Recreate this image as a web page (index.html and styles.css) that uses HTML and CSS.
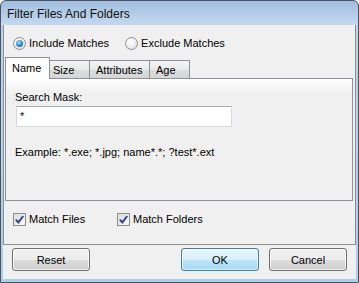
FILE: index.html
```html
<!DOCTYPE html>
<html lang="en">
<head>
    <meta charset="UTF-8">
    <title>Filter Files And Folders</title>
    <link rel="stylesheet" href="styles.css">
</head>
<body>
    <div class="window">
        <div class="titlebar">Filter Files And Folders</div>
        <div class="client">
            <div class="content">
                <div class="radios">
                    <label class="option"><span class="radio checked"></span>Include Matches</label>
                    <label class="option"><span class="radio"></span>Exclude Matches</label>
                </div>
                <div class="tabs">
                    <div class="tab active tab-name">Name</div>
                    <div class="tab tab-size">Size</div>
                    <div class="tab tab-attr">Attributes</div>
                    <div class="tab tab-age">Age</div>
                </div>
                <div class="tab-page">
                    <div class="field-label">Search Mask:</div>
                    <div class="textbox">*</div>
                    <div class="example">Example: *.exe; *.jpg; name*.*; ?test*.ext</div>
                </div>
                <div class="checks">
                    <label class="option match-files">
                        <span class="checkbox"><svg width="9" height="9" viewBox="0 0 9 9"><path d="M0.8 4.6 L3.4 7.4 L8.2 1" fill="none" stroke="#34478a" stroke-width="2"/></svg></span>Match Files
                    </label>
                    <label class="option">
                        <span class="checkbox"><svg width="9" height="9" viewBox="0 0 9 9"><path d="M0.8 4.6 L3.4 7.4 L8.2 1" fill="none" stroke="#34478a" stroke-width="2"/></svg></span>Match Folders
                    </label>
                </div>
            </div>
            <div class="buttons">
                <button class="btn">Reset</button>
                <div class="btn-group">
                    <button class="btn default">OK</button>
                    <button class="btn">Cancel</button>
                </div>
            </div>
        </div>
    </div>
</body>
</html>
```

FILE: styles.css
```css
body {
    margin: 0;
    padding: 0;
    font-family: 'Liberation Sans', Arial, sans-serif;
    font-size: 11px;
    color: #000;
    background: #fff;
}
.window {
    width: 359px;
    height: 283px;
    box-sizing: border-box;
    border: 1px solid #4a5563;
    border-radius: 6px 6px 0 0;
    background: linear-gradient(#a2bedf, #c4d9f0 24px, #bcd4ee 24px, #a9d0ec 100%);
    display: flex;
    flex-direction: column;
    overflow: hidden;
}
.titlebar {
    height: 24px;
    line-height: 26px;
    padding-left: 6px;
    font-size: 12px;
    color: #111;
}
.client {
    flex: 1;
    margin: 0 2px 3px;
    background: #f0f0f0;
    display: flex;
    flex-direction: column;
}
.content {
    height: 220px;
    box-sizing: border-box;
    border: 1px solid #8f8f8f;
    border-top: none;
    padding: 0 1px;
}
.option {
    display: flex;
    align-items: center;
    height: 13px;
    line-height: 13px;
}
.radios {
    display: flex;
    padding: 12px 0 0 8px;
    gap: 16px;
}
.radio {
    width: 11px;
    height: 11px;
    border: 1px solid #8c8e91;
    border-radius: 50%;
    background: radial-gradient(circle at 40% 35%, #ffffff, #e6e6e6 70%, #d2d2d2);
    margin-right: 3px;
    position: relative;
}
.radio.checked::after {
    content: "";
    position: absolute;
    left: 2px;
    top: 2px;
    width: 7px;
    height: 7px;
    border-radius: 50%;
    background: radial-gradient(circle at 40% 35%, #a9e0ff, #2d84cf 55%, #174a86);
}
.tabs {
    display: flex;
    align-items: flex-end;
    margin-top: 7px;
}
.tab {
    box-sizing: border-box;
    height: 18px;
    border: 1px solid #8d9199;
    border-bottom: none;
    margin-right: -1px;
    background: linear-gradient(#f4f4f4, #e8e8e8 50%, #dcdcdc 51%, #d6d6d6);
    padding-left: 3px;
    line-height: 18px;
}
.tab.active {
    height: 22px;
    margin-bottom: -1px;
    background: #fff;
    position: relative;
    z-index: 1;
    padding-left: 6px;
    line-height: 20px;
}
.tab-name { width: 45px; }
.tab-size { width: 41px; }
.tab-attr { width: 61px; padding-left: 6px; }
.tab-age { width: 41px; padding-left: 6px; }
.tab-page {
    height: 123px;
    box-sizing: border-box;
    border: 1px solid #8d9199;
    margin-right: 1px;
    padding: 12px 9px 0;
    background: linear-gradient(#ffffff, #f0f0f0 14px);
}
.field-label {
    line-height: 13px;
}
.textbox {
    width: 216px;
    height: 21px;
    box-sizing: border-box;
    margin: 2px 0 0 1px;
    border: 1px solid #d6dbe1;
    border-top-color: #abadb3;
    background: #fff;
    padding-left: 3px;
    line-height: 19px;
}
.example {
    margin-top: 19px;
    line-height: 13px;
}
.checks {
    display: flex;
    padding: 12px 0 0 8px;
}
.match-files {
    width: 104px;
}
.checkbox {
    width: 11px;
    height: 11px;
    border: 1px solid #8c8e91;
    background: linear-gradient(135deg, #dcdcdc, #fafafa);
    margin-right: 3px;
    display: flex;
    align-items: center;
    justify-content: center;
}
.buttons {
    flex: 1;
    display: flex;
    justify-content: space-between;
    padding: 3px 9px 0;
}
.btn-group {
    display: flex;
    gap: 10px;
}
.btn {
    width: 78px;
    height: 23px;
    box-sizing: border-box;
    border: 1px solid #707070;
    border-radius: 3px;
    background: linear-gradient(#f2f2f2, #ebebeb 50%, #dddddd 51%, #cfcfcf);
    font-family: 'Liberation Sans', Arial, sans-serif;
    font-size: 11px;
    color: #000;
    padding: 0;
    box-shadow: inset 0 0 0 1px rgba(255, 255, 255, 0.7);
}
.btn.default {
    border-color: #3c7fb1;
    background: linear-gradient(#eaf6fd, #d9f0fc 50%, #bee6fd 51%, #a7d9f5);
    box-shadow: inset 0 0 0 1px rgba(255, 255, 255, 0.6);
}
```
